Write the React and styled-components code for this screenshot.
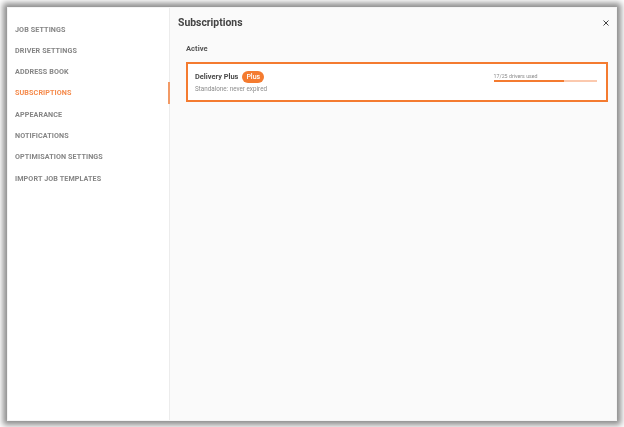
import React from 'react';
import styled, { createGlobalStyle } from 'styled-components';

const orange = '#f47b30';

const GlobalStyle = createGlobalStyle`
  html, body { margin: 0; padding: 0; background: #fff; }
  body { font-family: Roboto, "Liberation Sans", sans-serif; overflow: hidden; }
`;

const Page = styled.div`
  width: 624px;
  height: 427px;
  box-sizing: border-box;
  padding: 7px 7px 6px 7px;
  filter: blur(0.3px);
`;

const Dialog = styled.div`
  height: 100%;
  display: flex;
  background: #fafafa;
  box-shadow: 0 0 6px 4px #8c8c8c;
  border: 1px solid #f4f4f4;
  box-sizing: border-box;
`;

const Sidebar = styled.nav`
  width: 162px;
  flex: none;
  box-sizing: border-box;
  background: #fff;
  border-right: 1px solid #ececec;
  padding-top: 10.6px;
  display: flex;
  flex-direction: column;
`;

const NavItem = styled.div`
  height: 21.3px;
  line-height: 21.3px;
  padding-left: 7px;
  font-size: 7.2px;
  font-weight: 700;
  letter-spacing: 0.1px;
  text-transform: uppercase;
  color: ${p => (p.$active ? '#f58a4b' : '#858585')};
  border-right: 2px solid ${p => (p.$active ? '#f29a66' : 'transparent')};
  margin-right: -1px;
`;

const Main = styled.main`
  flex: 1;
  min-width: 0;
  padding: 7px 8px 0 8px;
  box-sizing: border-box;
`;

const Header = styled.header`
  display: flex;
  justify-content: space-between;
  align-items: center;
  height: 14px;
`;

const Title = styled.h1`
  margin: 0;
  font-size: 10.4px;
  font-weight: 700;
  color: #444;
`;

const Close = styled.button`
  border: 0;
  background: none;
  padding: 0;
  width: 8px;
  height: 8px;
  display: flex;
  color: #444;
  margin-right: -1.5px;
  margin-top: 1px;
`;

const Section = styled.h2`
  margin: 15px 0 8px 8px;
  font-size: 7.6px;
  line-height: 10px;
  font-weight: 700;
  color: #555;
`;

const Card = styled.section`
  display: flex;
  justify-content: space-between;
  align-items: flex-start;
  height: 40px;
  margin-left: 8px;
  box-sizing: border-box;
  background: #fff;
  border: 2.5px solid ${orange};
  padding: 6.5px 9.5px 0 7px;
`;

const Name = styled.div`
  display: flex;
  align-items: center;
  gap: 4px;
  font-size: 7.4px;
  font-weight: 700;
  color: #4a4a4a;
`;

const Badge = styled.span`
  background: ${orange};
  color: #fff;
  border-radius: 6px;
  font-size: 7px;
  font-weight: 500;
  line-height: 12px;
  padding: 0 4px;
`;

const Sub = styled.div`
  margin-top: 2px;
  font-size: 6.3px;
  line-height: 9px;
  color: #8c8c8c;
`;

const Usage = styled.div`
  width: 103px;
  margin-top: 2px;
`;

const UsageLabel = styled.div`
  font-size: 5.3px;
  line-height: 7px;
  color: #8c8c8c;
`;

const Track = styled.div`
  height: 2.5px;
  background: #fbc9ae;
`;

const Fill = styled.div`
  height: 100%;
  background: ${orange};
`;

const items = ['Job settings', 'Driver settings', 'Address book', 'Subscriptions', 'Appearance', 'Notifications', 'Optimisation settings', 'Import job templates'];

const App = () => (
  <Page>
    <GlobalStyle />
    <Dialog>
      <Sidebar>
        {items.map(item => (
          <NavItem key={item} $active={item === 'Subscriptions'}>{item}</NavItem>
        ))}
      </Sidebar>
      <Main>
        <Header>
          <Title>Subscriptions</Title>
          <Close aria-label="Close">
            <svg width="8" height="8" viewBox="0 0 8 8">
              <path d="M1.5 1.5l5 5M6.5 1.5l-5 5" stroke="currentColor" strokeWidth="1" fill="none" />
            </svg>
          </Close>
        </Header>
        <Section>Active</Section>
        <Card>
          <div>
            <Name>Delivery Plus <Badge>Plus</Badge></Name>
            <Sub>Standalone: never expired</Sub>
          </div>
          <Usage>
            <UsageLabel>17/25 drivers used</UsageLabel>
            <Track>
              <Fill style={{ width: `${(17 / 25) * 100}%` }} />
            </Track>
          </Usage>
        </Card>
      </Main>
    </Dialog>
  </Page>
);

export default App;
